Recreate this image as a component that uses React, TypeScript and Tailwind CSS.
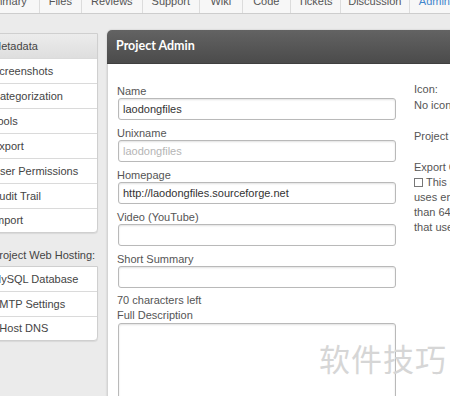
import React from "react";

const TABS = [
  { name: "Files", w: "w-[42px]" },
  { name: "Reviews", w: "w-[61px]" },
  { name: "Support", w: "w-[57px]" },
  { name: "Wiki", w: "w-[43px]" },
  { name: "Code", w: "w-[48px]" },
  { name: "Tickets", w: "w-[50px]" },
  { name: "Discussion", w: "w-[69px]" },
];

const MENU = [
  "Metadata",
  "Screenshots",
  "Categorization",
  "Tools",
  "Export",
  "User Permissions",
  "Audit Trail",
  "Import",
];

const HOSTING = ["MySQL Database", "SMTP Settings", "VHost DNS"];

const SideBox: React.FC<{ items: string[]; active?: string }> = ({ items, active }) => (
  <div className="bg-white border border-[#cfcfcf] rounded-b-[4px] shadow-[0_1px_1px_rgba(0,0,0,0.08)]">
    {items.map((item, i) => (
      <div
        key={item}
        className={
          "flex items-center pl-[7px] text-[11px] text-[#444] whitespace-nowrap " +
          (i < items.length - 1 ? "h-[25px] border-b border-[#dadada] " : "h-[23px] ") +
          (item === active ? "bg-gradient-to-b from-[#ececec] to-[#dedede]" : "")
        }
      >
        {item}
      </div>
    ))}
  </div>
);

const Field: React.FC<{ label: string; value?: string; muted?: boolean; first?: boolean }> = ({
  label,
  value,
  muted,
  first,
}) => (
  <div className={first ? "" : "mt-[6px]"}>
    <div className="h-[14px] leading-[14px] text-[11px] text-[#555]">{label}</div>
    <div className="ml-[1px] h-[22px] border border-[#b9b9b9] rounded-[3px] shadow-[inset_0_1px_2px_rgba(0,0,0,0.12)] flex items-center pl-[4px] text-[11px] bg-white">
      <span className={muted ? "text-[#b5b5b5]" : "text-[#333]"}>{value}</span>
    </div>
  </div>
);

export default function App() {
  return (
    <div
      className="w-[450px] h-[396px] overflow-hidden relative bg-[#ebebeb]"
      style={{ fontFamily: '"Liberation Sans", Arial, sans-serif' }}
    >
      {/* top tabs, cut off at the top edge */}
      <div className="h-[24px] -mt-[10px] flex items-center bg-[#f7f7f7] border-b border-[#cdcdcd] text-[11px] text-[#555] whitespace-nowrap">
        <div className="w-[80px] -ml-[40px] h-full flex items-center justify-end pr-[12px] border-r border-[#dcdcdc]">
          Summary
        </div>
        {TABS.map((t) => (
          <div
            key={t.name}
            className={t.w + " h-full flex items-center justify-center border-r border-[#dcdcdc] shrink-0"}
          >
            {t.name}
          </div>
        ))}
        <div className="h-full flex items-center pl-[9px] text-[#3f86cc] shrink-0">Admin</div>
      </div>

      <div className="flex items-start">
        {/* sidebar */}
        <div className="-ml-[16px] w-[114px] shrink-0 mt-[19px]">
          <SideBox items={MENU} active="Metadata" />
          <div className="mt-[14px] h-[19px] pl-[8px] text-[11px] text-[#444] whitespace-nowrap">
            Project Web Hosting:
          </div>
          <SideBox items={HOSTING} />
        </div>

        {/* main panel */}
        <div className="ml-[9px] mt-[16px] w-[420px] shrink-0 rounded-tl-[5px] overflow-hidden shadow-[0_0_2px_rgba(0,0,0,0.2)]">
          <div className="h-[34px] flex items-center pl-[9px] bg-gradient-to-b from-[#636363] to-[#4b4b4b] border-b border-[#3f3f3f]">
            <span
              className="text-white text-[12.5px] font-bold"
              style={{ fontFamily: "Lato, 'Open Sans', sans-serif" }}
            >
              Project Admin
            </span>
          </div>
          <div className="bg-white h-[400px] flex pl-[9px] pt-[20px] border-l border-[#d4d4d4]">
            <div className="w-[279px] shrink-0">
              <Field first label="Name" value="laodongfiles" />
              <Field label="Unixname" value="laodongfiles" muted />
              <Field label="Homepage" value="http://laodongfiles.sourceforge.net" />
              <Field label="Video (YouTube)" />
              <Field label="Short Summary" />
              <div className="mt-[5px] h-[15px] leading-[15px] text-[11px] text-[#555]">70 characters left</div>
              <div className="h-[15px] leading-[15px] text-[11px] text-[#555]">Full Description</div>
              <div className="ml-[1px] h-[120px] border border-[#b9b9b9] rounded-[3px] shadow-[inset_0_1px_2px_rgba(0,0,0,0.12)]" />
            </div>
            <div className="ml-[18px] -mt-[2px] text-[11px] leading-[15px] text-[#555] whitespace-nowrap">
              <div>Icon:</div>
              <div className="mt-[1px]">No icon</div>
              <div className="mt-[16px]">Project Status</div>
              <div className="mt-[16px]">Export Control:</div>
              <div className="flex items-center">
                <span className="inline-block w-[9px] h-[9px] border border-[#777] mr-[3px]" />
                This project
              </div>
              <div>uses encryption stronger</div>
              <div>than 64-bit</div>
              <div>that uses encryption</div>
            </div>
          </div>
        </div>
      </div>

      {/* watermark */}
      <div
        className="absolute left-[319px] top-[338px] text-[31px] leading-[40px] text-[#d6d6d6] tracking-[1px]"
        style={{ fontFamily: '"Noto Sans CJK SC", sans-serif' }}
      >
        软件技巧
      </div>
    </div>
  );
}
